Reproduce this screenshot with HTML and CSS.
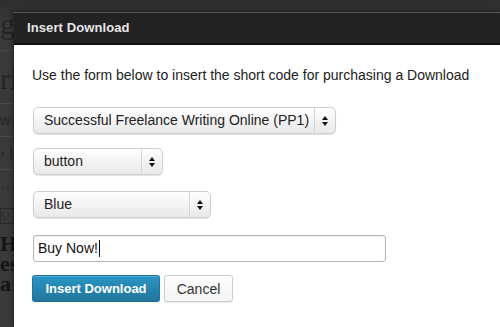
FILE: index.html
```html
<!DOCTYPE html>
<html>
<head>
<meta charset="utf-8">
<link rel="stylesheet" href="styles.css">
</head>
<body>
<div class="page">
  <div class="pg-line pg-big">ge</div>
  <div class="pg-rule"></div>
  <div class="pg-line pg-big2">ri</div>
  <div class="pg-rule"></div>
  <div class="pg-line pg-small">w</div>
  <div class="pg-rule"></div>
  <div class="pg-line pg-small">› |</div>
  <div class="pg-rule"></div>
  <div class="pg-line pg-tiny">1 2 3</div>
  <div class="pg-line pg-box">U</div>
  <div class="pg-line pg-head">He</div>
  <div class="pg-line pg-head">es</div>
  <div class="pg-line pg-head">a</div>
</div>

<div class="overlay"></div>

<div class="dialog">
  <div class="dialog-title">Insert Download</div>
  <div class="dialog-body">
    <p class="intro">Use the form below to insert the short code for purchasing a Download</p>
    <div class="select sel-product"><span class="sel-text">Successful Freelance Writing Online (PP1)</span><span class="sel-arrows"><i class="up"></i><i class="down"></i></span></div>
    <div class="select sel-type"><span class="sel-text">button</span><span class="sel-arrows"><i class="up"></i><i class="down"></i></span></div>
    <div class="select sel-color"><span class="sel-text">Blue</span><span class="sel-arrows"><i class="up"></i><i class="down"></i></span></div>
    <div class="text-input"><span>Buy Now!</span><span class="caret"></span></div>
    <div class="actions">
      <button class="btn btn-primary">Insert Download</button>
      <button class="btn btn-secondary">Cancel</button>
    </div>
  </div>
</div>
</body>
</html>
```

FILE: styles.css
```css
* { box-sizing: border-box; }
html, body { margin: 0; padding: 0; }
body {
  width: 500px;
  height: 327px;
  overflow: hidden;
  position: relative;
  background: #3a3a3a;
  font-family: "Liberation Sans", Arial, sans-serif;
}

.page {
  padding: 4px 0 0 0;
  width: 14px;
  overflow: hidden;
  font-family: "Liberation Serif", "Times New Roman", serif;
  color: #1c1c1c;
}
.pg-line { white-space: nowrap; }
.pg-big { font-size: 30px; line-height: 40px; color: #232323; }
.pg-big2 { font-size: 30px; line-height: 36px; color: #232323; padding-top: 4px; }
.pg-rule { height: 1px; background: #4a4a4a; margin: 6px 0; }
.pg-small { font-family: "Liberation Sans", sans-serif; font-size: 15px; line-height: 20px; color: #262626; }
.pg-tiny { font-size: 6px; line-height: 8px; margin: 14px 0 0 2px; color: #222; }
.pg-box { font-size: 12px; line-height: 14px; margin-top: 16px; border: 1px solid #2a2a2a; width: 14px; color: #2a2a2a; }
.pg-head { font-size: 22px; line-height: 20px; font-weight: bold; color: #151515; }
.pg-box + .pg-head { margin-top: 10px; }

.overlay {
  position: absolute;
  inset: 0;
  background: linear-gradient(#2e2e2e, rgba(0,0,0,0) 30px);
  pointer-events: none;
}

.dialog {
  position: absolute;
  left: 14px;
  top: 12px;
  width: 486px;
  height: 315px;
  background: #fff;
  box-shadow: 0 0 6px rgba(0,0,0,0.6);
}
.dialog-title {
  height: 33px;
  background: #222;
  border-top: 1px solid #575757;
  border-bottom: 2px solid #0e0e0e;
  color: #e6e6e6;
  font-size: 13px;
  font-weight: bold;
  line-height: 30px;
  padding-left: 13px;
  letter-spacing: 0.1px;
}
.dialog-body {
  padding: 20px 0 0 18px;
  display: flex;
  flex-direction: column;
  align-items: flex-start;
}
.intro {
  margin: 0;
  font-size: 14px;
  line-height: 20px;
  color: #222;
}

.select {
  display: flex;
  align-items: stretch;
  height: 27px;
  margin-left: 1px;
  border: 1px solid #cfcfcf;
  border-radius: 5px;
  background: linear-gradient(#ffffff, #f3f3f3 50%, #e9e9e9);
  box-shadow: 0 1px 1px rgba(0,0,0,0.12);
  font-size: 14px;
  color: #222;
}
.sel-text {
  flex: 1;
  line-height: 25px;
  padding-left: 10px;
  white-space: nowrap;
}
.sel-arrows {
  width: 21px;
  border-left: 1px solid #d4d4d4;
  display: flex;
  flex-direction: column;
  align-items: center;
  justify-content: center;
  gap: 2px;
}
.sel-arrows i {
  display: block;
  width: 0;
  height: 0;
  border-left: 3px solid transparent;
  border-right: 3px solid transparent;
}
.sel-arrows .up { border-bottom: 4px solid #111; }
.sel-arrows .down { border-top: 4px solid #111; }

.sel-product { width: 303px; margin-top: 22px; }
.sel-type { width: 130px; margin-top: 14px; }
.sel-color { width: 178px; margin-top: 16px; }

.text-input {
  margin-top: 17px;
  margin-left: 1px;
  width: 353px;
  height: 27px;
  border: 1px solid #b4b4b4;
  border-radius: 3px;
  box-shadow: inset 0 1px 1px rgba(0,0,0,0.06);
  font-size: 14px;
  color: #111;
  line-height: 25px;
  padding-left: 4px;
  display: flex;
  align-items: center;
}
.caret {
  display: inline-block;
  width: 1px;
  height: 17px;
  background: #111;
  margin-left: 1px;
}

.actions {
  margin-top: 13px;
  display: flex;
  gap: 4px;
}
.btn {
  height: 27px;
  border-radius: 3px;
  font-family: "Liberation Sans", Arial, sans-serif;
  padding: 0;
  cursor: pointer;
}
.btn-primary {
  width: 128px;
  font-size: 13px;
  font-weight: bold;
  color: #fff;
  background: linear-gradient(#2a95c5, #21759b);
  border: 1px solid #21759b;
  border-bottom-color: #1e6a8d;
  box-shadow: inset 0 1px 0 rgba(120,200,230,0.5);
}
.btn-secondary {
  width: 69px;
  font-size: 14px;
  color: #333;
  background: linear-gradient(#fefefe, #f4f4f4);
  border: 1px solid #cccccc;
  box-shadow: inset 0 1px 0 #fff, 0 1px 0 rgba(0,0,0,0.08);
}
```
